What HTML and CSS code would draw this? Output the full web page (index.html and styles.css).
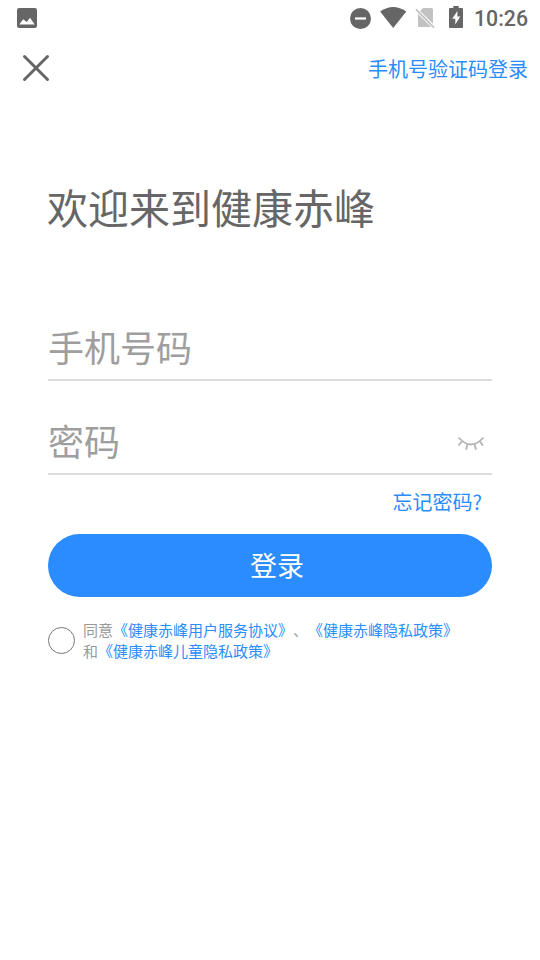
FILE: index.html
```
<!DOCTYPE html>
<html lang="zh-CN">
<head>
<meta charset="UTF-8">
<title>登录</title>
<link rel="stylesheet" href="styles.css">
</head>
<body>
<div class="status">
  <svg class="status-photo" width="20" height="20" viewBox="0 0 20 20"><path fill="#666" fill-rule="evenodd" d="M2.2 0h15.6Q20 0 20 2.2v15.6q0 2.2-2.2 2.2H2.2Q0 20 0 17.800V2.200Q0 0 2.200 0ZM2.300 16.600h15.400L13 9.800 9.800 14 6.200 11.200Z"/></svg>
  <div class="status-icons">
    <svg width="22" height="22" viewBox="0 0 22 22"><circle cx="10.500" cy="11.500" r="10.500" fill="#666"/><path d="M5 11.500h11" stroke="#fff" stroke-width="2.200"/></svg>
    <svg class="wifi" width="28" height="22" viewBox="0 0 28 22"><path fill="#666" d="M1.100 4.600Q14.200-4.600 27.300 4.600L14.200 21Z"/></svg>
    <svg class="sim" width="20" height="22" viewBox="0 0 20 22"><path fill="#c2c2c2" d="M8 1h8.500Q18 1 18 2.500v14.300L5 4ZM3 7 16.200 20H4.600Q3 20 3 18.500Z"/><path d="M1 2.300 19 20.600" stroke="#c2c2c2" stroke-width="1.700"/></svg>
    <svg class="battery" width="14" height="22" viewBox="0 0 14 22"><path fill="#666" d="M4.300 0h5.400v2H13q1 0 1 1v18q0 1-1 1H1q-1 0-1-1V3q0-1 1-1h3.300Z"/><path fill="#fff" d="M8.400 5 3.200 12.800h3.100v5.700l5-8H8.400Z"/></svg>
    <span class="clock">10:26</span>
  </div>
</div>
<header class="header">
  <svg width="28" height="28" viewBox="0 0 28 28"><path d="M2.500 2.500 25.500 25.500M25.500 2.500 2.500 25.500" stroke="#666" stroke-width="3" stroke-linecap="round"/></svg>
  <a class="link">手机号验证码登录</a>
</header>
<main class="content">
  <h1 class="title">欢迎来到健康赤峰</h1>
  <div class="field">手机号码</div>
  <div class="field field-password">
    <span>密码</span>
    <svg class="eye" width="28" height="16" viewBox="0 0 28 16" fill="none" stroke="#b3b3b3" stroke-width="1.800" stroke-linecap="round"><path d="M2 2Q14 15 26 2M5.200 5 2 9M10.500 8.200 9.200 13M17.500 8.200 18.800 13M22.800 5 25.500 9"/></svg>
  </div>
  <a class="link forgot">忘记密码?</a>
  <div class="button">登录</div>
  <div class="agree">
    <span class="radio"></span>
    <p class="terms">同意<a>《健康赤峰用户服务协议》</a>、<a>《健康赤峰隐私政策》</a><br>和<a>《健康赤峰儿童隐私政策》</a></p>
  </div>
</main>
</body>
</html>
```
FILE: styles.css
```
* { box-sizing: border-box; }
body {
  margin: 0;
  height: 960px;
  background: #fff;
  color: #666;
  font-family: "Noto Sans CJK SC", sans-serif;
}
svg { display: block; flex: none; }
.status {
  display: flex;
  justify-content: space-between;
  height: 36px;
  padding: 0 12px 0 17px;
}
.status-photo { margin-top: 8px; }
.status-icons { display: flex; align-items: flex-start; padding-top: 7px; }
.wifi { margin-left: 7px; }
.sim { margin-left: 8px; }
.battery { margin: -1px 11px 0 14px; }
.clock {
  width: 54px;
  font-family: Roboto, sans-serif;
  font-size: 21.3px;
  font-weight: 500;
  line-height: 24px;
  text-align: right;
}
.header {
  display: flex;
  align-items: center;
  justify-content: space-between;
  height: 64px;
  padding: 0 12px 0 22px;
}
.link {
  color: #2a8cff;
  font-size: 20px;
  line-height: 30px;
}
.header .link { padding-top: 2px; }
.content {
  display: flex;
  flex-direction: column;
  padding: 76px 48px 0;
}
.title {
  margin: 0 0 77px -1px;
  font-size: 41px;
  font-weight: 400;
  line-height: 60px;
}
.field {
  display: flex;
  align-items: center;
  justify-content: space-between;
  height: 68px;
  border-bottom: 2px solid #dcdcdc;
  color: #9e9e9e;
  font-size: 36px;
  line-height: 54px;
}
.field-password { margin-top: 26px; padding-right: 7px; }
.eye { margin-top: 8px; }
.forgot {
  align-self: flex-end;
  margin: 12px 10px 0 0;
}
.button {
  height: 63px;
  margin-top: 17px;
  padding-left: 14px;
  border-radius: 32px;
  background: #2a8cff;
  color: #fff;
  font-size: 27px;
  line-height: 62px;
  text-align: center;
}
.agree { display: flex; align-items: flex-start; margin-top: 22px; }
.radio {
  width: 27px;
  height: 27px;
  margin: 8px 8px 0 0;
  border: 1px solid #777;
  border-radius: 50%;
}
.terms {
  margin: 0;
  color: #999;
  font-size: 15px;
  line-height: 21px;
  white-space: nowrap;
  text-spacing-trim: space-all;
}
.terms a { color: #2a8cff; }
```
